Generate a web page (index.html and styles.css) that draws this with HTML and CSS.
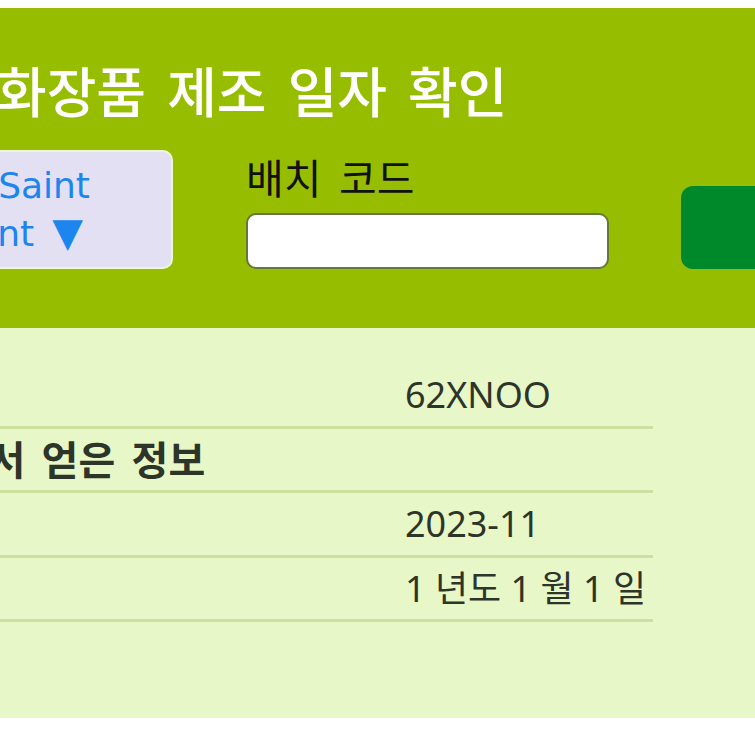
FILE: index.html
```html
<!DOCTYPE html>
<html lang="ko">
<head>
    <meta charset="UTF-8">
    <meta name="viewport" content="width=device-width, initial-scale=1.0">
    <title>화장품 제조 일자 확인</title>
    <link rel="stylesheet" href="styles.css">
</head>
<body>
    <div class="page">
        <!-- 상단 검색 영역 -->
        <header class="top">
            <h1 class="title">화장품 제조 일자 확인</h1>
            <form class="search">
                <button type="button" class="brand-select">Yves Saint<br>Laurent<span class="arrow">▼</span></button>
                <div class="field">
                    <label for="batch-code">배치 코드</label>
                    <input type="text" id="batch-code" name="code">
                </div>
                <button type="submit" class="check-btn">확인</button>
            </form>
        </header>

        <!-- 결과 영역 -->
        <section class="result">
            <div class="info">
                <div class="info-row">
                    <span class="info-label">배치 코드</span>
                    <span class="info-value">62XNOO</span>
                </div>
                <div class="info-row info-head">
                    <span class="info-label">배치 코드에서 얻은 정보</span>
                </div>
                <div class="info-row">
                    <span class="info-label">제조 일자</span>
                    <span class="info-value">2023-11</span>
                </div>
                <div class="info-row">
                    <span class="info-label">유효 기간</span>
                    <span class="info-value">1 년도 1 월 1 일</span>
                </div>
            </div>
        </section>
    </div>
</body>
</html>
```

FILE: styles.css
```css
html, body {
    margin: 0;
    overflow: hidden;
}

body {
    background: #ffffff;
    font-family: "Noto Sans", "Noto Sans CJK KR", sans-serif;
}

.page {
    padding-top: 8px;
}

.top {
    background: #97bd00;
    padding: 54px 0 59px;
}

.title {
    margin: 0 0 33px -3px;
    font-family: "Noto Sans CJK KR", sans-serif;
    font-size: 54px;
    font-weight: 500;
    line-height: 55px;
    word-spacing: 6px;
    color: #ffffff;
    white-space: nowrap;
}

.search {
    display: flex;
    align-items: flex-end;
    gap: 73px;
    margin-left: -181px;
}

.brand-select {
    flex: none;
    width: 354px;
    height: 119px;
    padding: 10px 81px 11px 0;
    background: #e2e0f2;
    border: 2px solid #eef6d4;
    border-radius: 10px;
    font-family: "DejaVu Sans", sans-serif;
    font-size: 36px;
    line-height: 47px;
    color: #1c86ee;
    text-align: right;
    white-space: nowrap;
}

.arrow {
    font-size: 40px;
    margin: 0 7px 0 18px;
}

.field {
    flex: none;
    display: flex;
    flex-direction: column;
}

.field label {
    font-family: "Noto Sans CJK KR", sans-serif;
    font-size: 41px;
    line-height: 44px;
    word-spacing: 6px;
    color: #111111;
    margin-bottom: 15px;
}

.field input {
    width: 363px;
    height: 56px;
    box-sizing: border-box;
    border: 2px solid #66773a;
    border-radius: 10px;
    background: #ffffff;
    font-size: 30px;
    padding: 0 12px;
}

.check-btn {
    flex: none;
    width: 260px;
    height: 83px;
    margin-left: -1px;
    background: #00892a;
    border: none;
    border-radius: 12px;
    font-family: "Noto Sans CJK KR", sans-serif;
    font-size: 36px;
    color: #ffffff;
}

.result {
    background: #e8f7c7;
    padding: 36px 0 96px;
}

.info {
    width: 865px;
    margin-left: -212px;
}

.info-row {
    display: grid;
    grid-template-columns: 617px 248px;
    padding: 9px 0 8.6px;
    border-bottom: 3px solid #cde09f;
    font-size: 36px;
    line-height: 44px;
    color: #2d3428;
    white-space: nowrap;
}

.info-head .info-label {
    font-size: 40px;
    font-weight: 700;
    word-spacing: 6px;
}
```
